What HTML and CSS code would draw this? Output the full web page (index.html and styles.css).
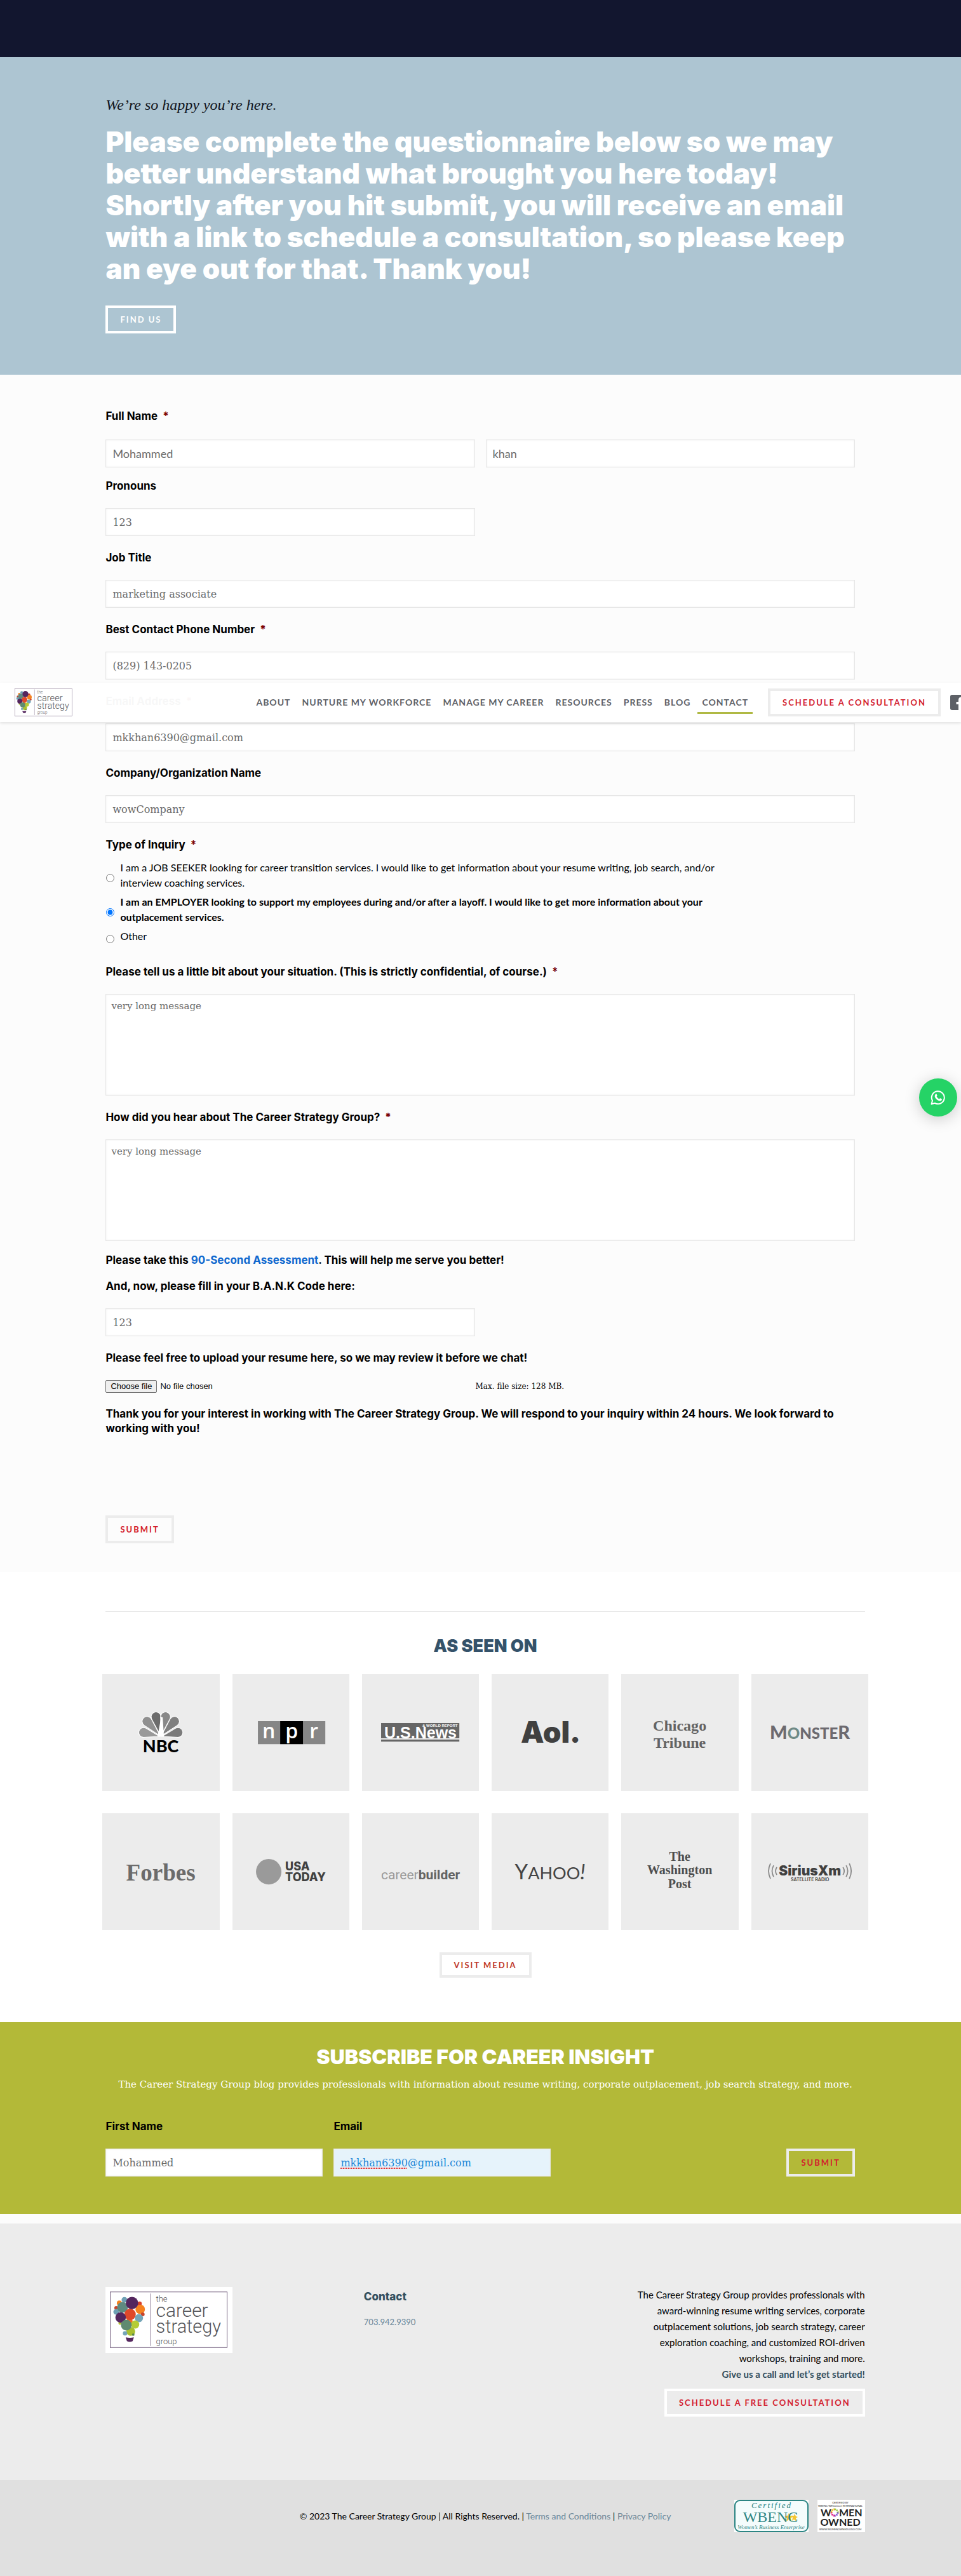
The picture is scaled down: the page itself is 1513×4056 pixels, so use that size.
FILE: index.html
```html
<!DOCTYPE html>
<html lang="en">
<head>
<meta charset="utf-8">
<meta name="viewport" content="width=device-width, initial-scale=1">
<title>Contact | The Career Strategy Group</title>
<link rel="stylesheet" href="styles.css">
</head>
<body>
<svg class="defs" aria-hidden="true">
  <symbol id="brand" viewBox="7 7 187 90">
    <rect x="7.500" y="7.500" width="185" height="88" fill="#fff" stroke="#6d5878"/>
    <g>
      <circle cx="30" cy="20" r="4.500" fill="#6fa0b4"/>
      <circle cx="22" cy="25" r="4" fill="#f58220"/>
      <circle cx="17" cy="33" r="3" fill="#c8452c"/>
      <circle cx="17" cy="39" r="4.500" fill="#6fa0b4"/>
      <circle cx="54" cy="26" r="3.500" fill="#d8402a"/>
      <circle cx="55" cy="35" r="7.500" fill="#f58220"/>
      <circle cx="59" cy="43" r="3" fill="#c8452c"/>
      <circle cx="53" cy="49" r="6.500" fill="#74a5b8"/>
      <circle cx="23" cy="57" r="2.500" fill="#b5c334"/>
      <circle cx="38" cy="54" r="5" fill="#f26b21"/>
      <circle cx="47" cy="59" r="6.500" fill="#b5cc34"/>
      <circle cx="40" cy="70" r="7" fill="#a9c030"/>
      <circle cx="31" cy="73" r="3.500" fill="#74a5b8"/>
      <circle cx="44" cy="75" r="2" fill="#5c8a4a"/>
      <circle cx="27" cy="32" r="8.500" fill="#5f8a80"/>
      <circle cx="39" cy="43" r="9" fill="#e0482a"/>
      <circle cx="24" cy="48" r="8.300" fill="#54265e"/>
      <circle cx="33" cy="60" r="8.500" fill="#5f8a70"/>
      <circle cx="42" cy="25" r="9.800" fill="#54265e"/>
      <path d="M32 79.500q6.500 1.500 13 0l-2 6q-4.500 2-9 0z" fill="#54265e"/>
    </g>
    <path d="M71.500 10v83" stroke="#8d7c96"/>
    <g font-family="Roboto, sans-serif" font-weight="300" fill="#55565a">
      <text x="80" y="23" font-size="13">the</text>
      <text x="80" y="47" font-size="30">career</text>
      <text x="80" y="72" font-size="29">strategy</text>
      <text x="80" y="90" font-size="13">group</text>
    </g>
  </symbol>
</svg>

<div class="topbar"></div>

<header class="site-header">
  <a class="site-header__logo" href="#"><svg viewBox="0 0 91 44" role="img" aria-label="The Career Strategy Group"><use href="#brand" width="91" height="44"/></svg></a>
  <nav class="nav">
    <a href="#">ABOUT</a>
    <a href="#">NURTURE MY WORKFORCE</a>
    <a href="#">MANAGE MY CAREER</a>
    <a href="#">RESOURCES</a>
    <a href="#">PRESS</a>
    <a href="#">BLOG</a>
    <a class="nav__current" href="#">CONTACT</a>
  </nav>
  <a class="btn btn--header" href="#">SCHEDULE A CONSULTATION</a>
  <a class="social" href="#" aria-label="Facebook"><svg viewBox="0 0 24 24"><rect width="24" height="24" rx="3" fill="#5d6066"/><path d="M13 24v-9h-3.500v-4H13V8c0-3 2-4.500 5-4.500h2.500V7H19c-1.500 0-2 .6-2 1.800V11h3.500l-.6 4H17v9z" fill="#fff"/></svg></a>
</header>

<main>
<section class="hero wrap">
  <p class="hero__intro">We’re so happy you’re here.</p>
  <h1>Please complete the questionnaire below so we may better understand what brought you here today! Shortly after you hit submit, you will receive an email with a link to schedule a consultation, so please keep an eye out for that. Thank you!</h1>
  <a class="btn btn--light" href="#">FIND US</a>
</section>

<section class="wrap">
<form class="form">
  <fieldset class="field field--name">
    <legend>Full Name <span class="req">*</span></legend>
    <div class="pair">
      <input class="sans" type="text" aria-label="First name" value="Mohammed">
      <input class="sans" type="text" aria-label="Last name" value="khan">
    </div>
  </fieldset>
  <div class="field">
    <label for="pronouns">Pronouns</label>
    <div class="pair"><input id="pronouns" type="text" value="123"></div>
  </div>
  <div class="field">
    <label for="job">Job Title</label>
    <input id="job" type="text" value="marketing associate">
  </div>
  <div class="field">
    <label for="phone">Best Contact Phone Number <span class="req">*</span></label>
    <input id="phone" type="tel" value="(829) 143-0205">
  </div>
  <div class="field">
    <label for="email">Email Address <span class="req">*</span></label>
    <input id="email" type="email" value="mkkhan6390@gmail.com">
  </div>
  <div class="field">
    <label for="company">Company/Organization Name</label>
    <input id="company" type="text" value="wowCompany">
  </div>
  <fieldset class="field field--radios">
    <legend>Type of Inquiry <span class="req">*</span></legend>
    <label class="radio"><input type="radio" name="inquiry"><span>I am a JOB SEEKER looking for career transition services. I would like to get information about your resume writing, job search, and/or interview coaching services.</span></label>
    <label class="radio"><input type="radio" name="inquiry" checked><span>I am an EMPLOYER looking to support my employees during and/or after a layoff. I would like to get more information about your outplacement services.</span></label>
    <label class="radio"><input type="radio" name="inquiry"><span>Other</span></label>
  </fieldset>
  <div class="field">
    <label for="situation">Please tell us a little bit about your situation. (This is strictly confidential, of course.) <span class="req">*</span></label>
    <textarea id="situation">very long message</textarea>
  </div>
  <div class="field field--tight">
    <label for="hear">How did you hear about The Career Strategy Group? <span class="req">*</span></label>
    <textarea id="hear">very long message</textarea>
  </div>
  <p class="note">Please take this <a href="#">90-Second Assessment</a>. This will help me serve you better!</p>
  <div class="field">
    <label for="bank">And, now, please fill in your B.A.N.K Code here:</label>
    <div class="pair"><input id="bank" type="text" value="123"></div>
  </div>
  <div class="field">
    <label for="resume">Please feel free to upload your resume here, so we may review it before we chat!</label>
    <div class="upload">
      <label class="upload__pick"><input id="resume" type="file"><span class="upload__button">Choose file</span><span>No file chosen</span></label>
      <span class="upload__limit">Max. file size: 128 MB.</span>
    </div>
  </div>
  <p class="thanks">Thank you for your interest in working with The Career Strategy Group. We will respond to your inquiry within 24 hours. We look forward to working with you!</p>
  <button class="btn" type="submit">SUBMIT</button>
</form>
</section>

<section class="media wrap">
  <h2>AS SEEN ON</h2>
  <div class="tiles">
    <div class="tile"><svg viewBox="0 0 184 184" role="img" aria-label="NBC">
      <g stroke="#fff" stroke-width="1">
        <path transform="translate(90 98) rotate(-76)" d="M0 0L-7.500-24a7.700 7.700 0 1 1 15 0z" fill="#9a9a9a"/>
        <path transform="translate(94 98) rotate(76)" d="M0 0L-7.500-24a7.700 7.700 0 1 1 15 0z" fill="#7b7b7b"/>
        <path transform="translate(91 97) rotate(-42)" d="M0 0L-7.500-29a7.700 7.700 0 1 1 15 0z" fill="#909090"/>
        <path transform="translate(93 97) rotate(42)" d="M0 0L-7.500-29a7.700 7.700 0 1 1 15 0z" fill="#808080"/>
        <path transform="translate(92 97) rotate(-14)" d="M0 0L-7.500-29a7.700 7.700 0 1 1 15 0z" fill="#6c6c6c"/>
        <path transform="translate(92 97) rotate(14)" d="M0 0L-7.500-29a7.700 7.700 0 1 1 15 0z" fill="#888"/>
      </g>
      <path d="M87 98l5-27-1-4 4 1 2 30z" fill="#fff"/>
      <text x="92" y="123" font-size="27" font-weight="900" font-family="Lato, sans-serif" text-anchor="middle">NBC</text></svg></div>
    <div class="tile"><svg viewBox="0 0 184 184" role="img" aria-label="NPR">
      <path d="M40 74h35v36H40zM111 74h35v36h-35z" fill="#868686"/><path d="M75 74h36v36H75z"/>
      <g font-family="'Open Sans', sans-serif" font-weight="600" font-size="32" fill="#fff" text-anchor="middle"><text x="57" y="101">n</text><text x="93" y="101">p</text><text x="128" y="101">r</text></g></svg></div>
    <div class="tile"><svg viewBox="0 0 184 184" role="img" aria-label="U.S. News and World Report">
      <path d="M30 77h123v24H30zM30 103h123v3H30z" fill="#666"/>
      <g font-family="'Liberation Sans', sans-serif" font-weight="700" fill="#fff"><text x="35" y="101" font-size="25">U.S.News</text><text x="95" y="83" font-size="6">&amp; WORLD REPORT</text></g></svg></div>
    <div class="tile"><svg viewBox="0 0 184 184"><text x="93" y="108" font-size="46" font-weight="900" font-family="Inter, sans-serif" fill="#404040" text-anchor="middle">Aol.</text></svg></div>
    <div class="tile"><svg viewBox="0 0 184 184"><g font-size="24" font-weight="700" font-family="'Liberation Serif', serif" fill="#636363" text-anchor="middle"><text x="92" y="89">Chicago</text><text x="92" y="116">Tribune</text></g></svg></div>
    <div class="tile"><svg viewBox="0 0 184 184"><text x="92" y="102" font-family="Lato, sans-serif" font-weight="900" font-size="24" fill="#6c6a70" text-anchor="middle"><tspan font-size="29">M</tspan><tspan fill="#6f8a86">O</tspan>NSTE<tspan font-size="29">R</tspan></text></svg></div>
    <div class="tile"><svg viewBox="0 0 184 184"><text x="92" y="106" font-size="37" font-weight="700" font-family="'Liberation Serif', serif" fill="#6b6b6b" text-anchor="middle">Forbes</text></svg></div>
    <div class="tile"><svg viewBox="0 0 184 184"><circle cx="57" cy="92" r="20" fill="#9a9a9a"/><g font-size="18" font-weight="800" font-family="Inter, sans-serif" fill="#404040"><text x="83" y="90">USA</text><text x="83" y="107">TODAY</text></g></svg></div>
    <div class="tile"><svg viewBox="0 0 184 184"><text x="92" y="104" font-size="21" font-family="'Liberation Sans Narrow', Roboto, sans-serif" fill="#999" text-anchor="middle">career<tspan fill="#636363" font-weight="700">builder</tspan></text></svg></div>
    <div class="tile"><svg viewBox="0 0 184 184"><text x="92" y="104" font-size="27" font-weight="400" font-family="Lato, sans-serif" fill="#444" text-anchor="middle"><tspan font-size="33">Y</tspan>AHOO<tspan font-size="33" font-style="italic">!</tspan></text></svg></div>
    <div class="tile"><svg viewBox="0 0 184 184"><g font-size="20" font-weight="700" font-family="'Liberation Serif', serif" fill="#4d4d4d" text-anchor="middle"><text x="92" y="75">The</text><text x="92" y="96">Washington</text><text x="92" y="118">Post</text></g></svg></div>
    <div class="tile"><svg viewBox="0 0 184 184"><g fill="none" stroke="#8a8a8a" stroke-width="1.800"><path d="M30 79q-6 12 0 24M35 82q-5 9 0 18M40 85q-4 6 0 12M154 79q6 12 0 24M149 82q5 9 0 18M144 85q4 6 0 12"/></g><g font-family="Inter, sans-serif" fill="#404040" text-anchor="middle"><text x="92" y="98" font-size="21" font-weight="900">SiriusXm</text><text x="92" y="107" font-size="7" font-weight="600">SATELLITE RADIO</text></g></svg></div>
  </div>
  <a class="btn btn--media" href="#">VISIT MEDIA</a>
</section>

<section class="subscribe wrap">
  <h2>SUBSCRIBE FOR CAREER INSIGHT</h2>
  <p>The Career Strategy Group blog provides professionals with information about resume writing, corporate outplacement, job search strategy, and more.</p>
  <form class="subscribe__form">
    <div class="field">
      <label for="sub-name">First Name</label>
      <input id="sub-name" type="text" value="Mohammed">
    </div>
    <div class="field">
      <label for="sub-email">Email</label>
      <div class="autofill"><input id="sub-email" type="email" value="mkkhan6390@gmail.com"><span class="autofill__typo"></span></div>
    </div>
    <button class="btn" type="submit">SUBMIT</button>
  </form>
</section>
</main>

<footer>
  <div class="footer wrap">
    <a class="footer__logo" href="#"><svg viewBox="0 0 186 90" role="img" aria-label="The Career Strategy Group"><use href="#brand" width="186" height="90"/></svg></a>
    <div>
      <h3>Contact</h3>
      <a class="footer__phone" href="#">703.942.9390</a>
    </div>
    <div class="footer__about">
      <p>The Career Strategy Group provides professionals with award-winning resume writing services, corporate outplacement solutions, job search strategy, career exploration coaching, and customized ROI-driven workshops, training and more.<br><strong>Give us a call and let’s get started!</strong></p>
      <a class="btn btn--footer" href="#">SCHEDULE A FREE CONSULTATION</a>
    </div>
  </div>
  <div class="legal wrap">
    <p>© 2023 The Career Strategy Group | All Rights Reserved. | <a href="#">Terms and Conditions</a> | <a href="#">Privacy Policy</a></p>
    <div class="badges">
      <svg width="117" height="51" viewBox="0 0 117 51" role="img" aria-label="Certified WBENC Women's Business Enterprise">
        <rect width="117" height="51" fill="#fff"/><rect x="1" y="1" width="115" height="49" rx="8" fill="#f4fcfc" stroke="#2c8583" stroke-width="2"/>
        <path d="M86 21l2 4 5 1-4 3 1 5-4-3-4 3 1-5-4-3 5-1zM95 22l2 4 3 1-3 2 1 5-4-3-3 2 1-5-2-3 4 0z" fill="#f4c531"/>
        <g font-family="'Liberation Serif', serif" fill="#2c8583" text-anchor="middle"><text x="59" y="13" font-size="13" font-style="italic" letter-spacing="2">Certified</text><text x="57" y="35" font-size="24">WBENC</text><text x="58" y="46" font-size="9" font-style="italic">Women’s Business Enterprise</text></g>
      </svg>
      <svg width="75" height="51" viewBox="0 0 75 51" role="img" aria-label="Women Owned">
        <rect width="75" height="51" fill="#fff"/>
        <g font-family="Lato, sans-serif" fill="#222" text-anchor="middle"><text x="36" y="6" font-size="4">CERTIFIED BY</text><text x="36" y="11" font-size="4">WBENC/WEConnect INTERNATIONAL</text><text x="5" y="26" font-size="16" font-weight="700" text-anchor="start">W</text><text x="34" y="26" font-size="16" font-weight="700" text-anchor="start">MEN</text><text x="36" y="41" font-size="16" font-weight="700">OWNED</text><text x="36" y="48" font-size="4">WWW.WOMENOWNEDLOGO.COM</text></g>
        <g fill="none" stroke-width="3" stroke-dasharray="2 1"><path d="M22 20a5 5 0 0 1 5-5" stroke="#f4b61f"/><path d="M27 15a5 5 0 0 1 5 5" stroke="#8bc53f"/><path d="M32 20a5 5 0 0 1-5 5" stroke="#7a4bd0"/><path d="M27 25a5 5 0 0 1-5-5" stroke="#e01f8b"/></g>
      </svg>
    </div>
  </div>
</footer>

<a class="whatsapp" href="#" aria-label="WhatsApp"><svg viewBox="0 0 24 24"><path d="M1.500 22.500l1.500-5.500a10 10 0 1 1 3.800 3.900z" fill="none" stroke="#fff" stroke-width="2" stroke-linejoin="round"/><path d="M8.300 6.500c.5-.4 1.100-.3 1.300.2l.9 2c.1.400 0 .8-.9 1.800 1 1.900 2.300 3.100 4.200 3.900.9-1 1.200-1.400 1.600-1.200l2.200 1.100c.5.3.3 1.500-.2 2.100-1 1.100-2.600 1.300-4.600.5-3.300-1.300-5.500-4-6-6.200-.3-1.500.3-3.200 1.500-4.200z" fill="#fff"/></svg></a>
</body>
</html>
```
FILE: styles.css
```css
* { box-sizing: border-box; }

body {
  position: relative;
  margin: 0;
  overflow-x: hidden;
  background: #fcfcfc;
  color: #000;
  font: 16px/24px Lato, sans-serif;
}

h1, h2, h3, p { margin: 0; }
a { text-decoration: none; }
svg { display: block; }
.defs { display: none; }

.wrap { padding-left: 11%; padding-right: 10%; }
.topbar { height: 90px; background: #12162f; }

.btn {
  display: inline-block;
  flex: none;
  padding: 0 19px;
  border: 4px solid #ececec;
  background: none;
  color: #d3202e;
  font: 700 13px/36px Lato, sans-serif;
  letter-spacing: 2px;
  white-space: nowrap;
  cursor: pointer;
}
.btn--light { border-color: #fff; color: #fff; }
.btn--media { line-height: 32px; color: #c0392b; }
.btn--footer { border-color: #fff; }

/* sticky bar, shown over the form */
.site-header {
  position: absolute;
  top: 1075px;
  left: 0;
  right: 0;
  z-index: 2;
  display: flex;
  align-items: center;
  height: 62px;
  padding-left: 23px;
  background: rgba(255, 255, 255, .97);
  box-shadow: 0 2px 4px rgba(0, 0, 0, .1);
}
.site-header__logo { width: 91px; }
.nav { display: flex; gap: 4px; margin-left: auto; }
.nav a {
  padding: 3px 7px 0;
  border-bottom: 3px solid transparent;
  color: #5d6066;
  font-size: 14px;
  font-weight: 700;
  line-height: 30px;
  letter-spacing: 1px;
  white-space: nowrap;
}
.nav .nav__current { border-color: #b0b944; }
.btn--header { margin-left: 24px; }
.social { flex: none; width: 24px; margin: 0 -7px 0 15px; }

.hero { padding-top: 60px; padding-bottom: 65px; background: #adc5d2; }
.hero__intro { color: #12161f; font: italic 24px/30px "Liberation Serif", serif; }
.hero h1 {
  margin: 18px 0 33px;
  color: #fff;
  font: 900 44px/50px Inter, sans-serif;
}

.form { padding: 53px 16px 45px 0; }
.field { display: flex; flex-direction: column; gap: 23px; min-width: 0; margin: 0 0 22px; padding: 0; border: 0; }
.field legend { margin: 0; padding: 0; }
.field > label:not(.radio), .field > legend, .note, .thanks {
  font: 700 17px/24px Inter, sans-serif;
}
.req { margin-left: 4px; color: #790000; }
.field--name { display: block; margin-bottom: 17px; }
.field--name .pair { margin-top: 25px; }
.pair { display: grid; grid-template-columns: 1fr 1fr; gap: 17px; }
.field--tight { margin-bottom: 18px; }

input[type="text"], input[type="tel"], input[type="email"], textarea {
  display: block;
  width: 100%;
  height: 44px;
  margin: 0;
  padding: 0 10px;
  border: 1px solid #e6e6e6;
  border-radius: 0;
  background: #fff;
  box-shadow: inset 0 0 3px #eee;
  color: #6b6b6b;
  font: 16px/24px "DejaVu Serif", serif;
}
input.sans[type="text"] { font: 18px/24px Lato, sans-serif; }
textarea { height: 160px; padding: 6px 8px; font-size: 15px; resize: none; }

.field--radios { display: block; margin-bottom: 32px; }
.radio { display: flex; gap: 9px; align-items: center; max-width: 1000px; margin-top: 6px; }
legend + .radio { margin-top: 12px; }
.radio input { flex: none; width: 13px; height: 13px; margin: 8px 0 0 1px; }
.radio input:checked + span { font-weight: 700; }

.note { margin-bottom: 17px; }
.note a { color: #1069cf; }
.upload { display: grid; grid-template-columns: 1fr 1fr; gap: 17px; align-items: center; }
.upload__pick { display: flex; gap: 5px; align-items: center; font: 13px/18px "Liberation Sans", sans-serif; }
.upload__pick input { position: absolute; width: 1px; height: 1px; opacity: 0; }
.upload__button { padding: 0 7px; border: 1px solid #6f6f6f; border-radius: 2px; background: #efefef; }
.upload__limit { margin-left: -16px; font: 12px/20px "DejaVu Serif", serif; }
.form .thanks { margin-bottom: 125px; line-height: 23px; }
.form > .btn { display: block; }

.media { padding-top: 62px; padding-bottom: 70px; background: #fff; text-align: center; }
.media h2 {
  padding: 38px 0 28px;
  border-top: 1px solid #e6e6e6;
  color: #34526a;
  font: 900 27px/32px Inter, sans-serif;
}
.tiles { display: grid; grid-template-columns: repeat(6, 1fr); gap: 35px 20px; margin: 0 -5px 35px; }
.tile { aspect-ratio: 1; background: #ececec; }

.subscribe { padding-top: 33px; padding-bottom: 59px; background: #b3b938; text-align: center; }
.subscribe h2 { color: #fff; font: 900 32px/44px Inter, sans-serif; }
.subscribe p { margin: 8px 0 41px; color: #fff; font: 15px/26px "DejaVu Serif", serif; }
.subscribe__form {
  display: grid;
  grid-template-columns: 29% 29% 1fr;
  gap: 17px;
  align-items: end;
  padding-right: 16px;
  text-align: left;
}
.subscribe .field { margin: 0; }
.subscribe .btn { justify-self: end; }
.autofill { position: relative; }
.autofill input[type="email"] { background: #e6f3fb; color: #1e88d8; }
.autofill__typo {
  position: absolute;
  top: 30px;
  left: 11px;
  width: 105px;
  height: 2px;
  background: repeating-linear-gradient(90deg, #e0393b 0 2px, #f3b4b8 2px 4px);
}

.footer {
  display: grid;
  grid-template-columns: 34% 1fr 360px;
  margin-top: 15px;
  padding-top: 100px;
  padding-bottom: 100px;
  background: #ececec;
}
.footer__logo { justify-self: start; align-self: start; width: 200px; padding: 7px; background: #fff; }
.footer h3 { color: #34505f; font: 800 17px/30px Inter, sans-serif; }
.footer__phone { display: block; margin-top: 13px; color: #6b8799; font-size: 13px; }
.footer__about { text-align: right; font-size: 15px; line-height: 25px; }
.footer__about p { margin-bottom: 10px; }
.footer__about strong { color: #34505f; }

.legal {
  display: grid;
  grid-template-columns: 1fr auto 1fr;
  align-items: center;
  padding-top: 31px;
  padding-bottom: 69px;
  background: #e0e0e0;
}
.legal p { grid-column: 2; font-size: 14px; }
.legal a { color: #6b8799; }
.badges { display: flex; gap: 14px; justify-content: flex-end; }

.whatsapp {
  position: absolute;
  top: 1698px;
  right: 6px;
  display: grid;
  place-items: center;
  width: 60px;
  height: 60px;
  border-radius: 50%;
  background: #25d366;
  box-shadow: 0 4px 24px rgba(0, 0, 0, .2);
}
.whatsapp svg { width: 24px; }
```
